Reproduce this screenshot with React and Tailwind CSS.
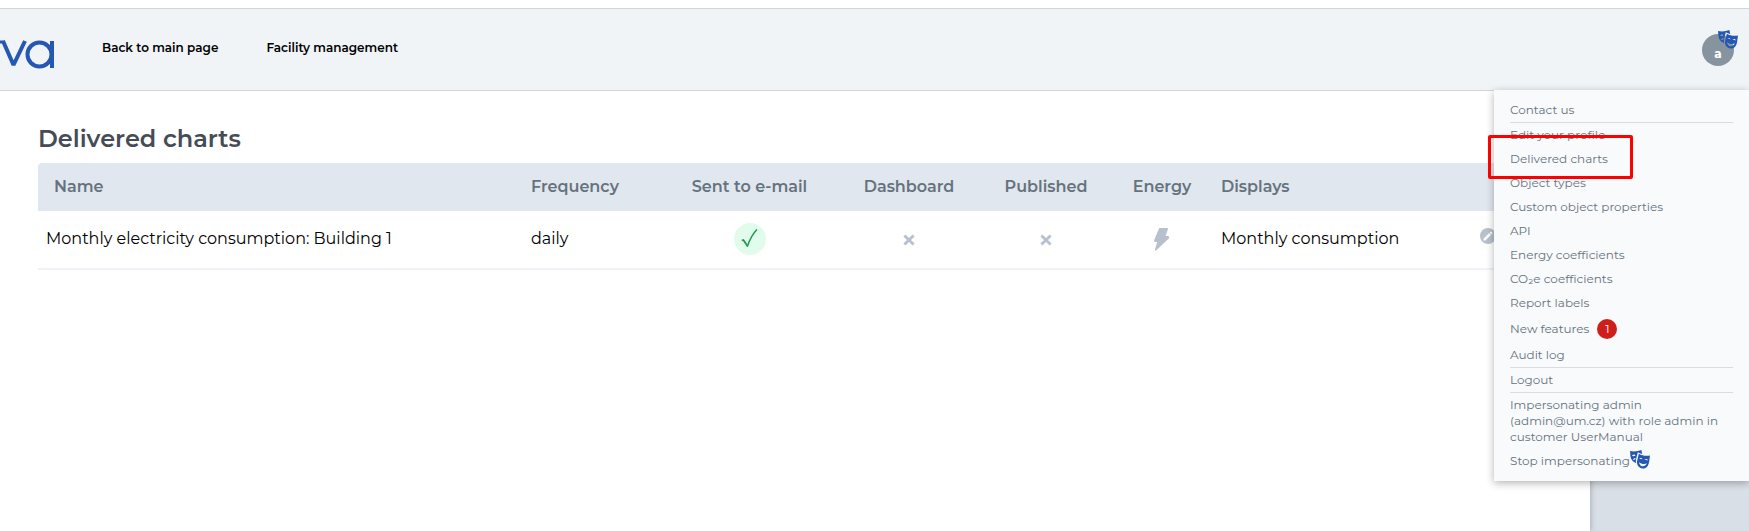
import React from "react";
import { MdEdit } from "react-icons/md";

const navLinks = ["Back to main page", "Facility management"];

const settingsLinks = [
  "Edit your profile",
  "Delivered charts",
  "Object types",
  "Custom object properties",
  "API",
  "Energy coefficients",
  "CO₂e coefficients",
  "Report labels",
];

const charts = [
  {
    name: "Monthly electricity consumption: Building 1",
    frequency: "daily",
    email: true,
    dashboard: false,
    published: false,
    displays: "Monthly consumption",
  },
];

function Logo() {
  return (
    <svg
      width="56"
      height="32"
      viewBox="0 0 56 32"
      fill="none"
      stroke="#2558b3"
      strokeWidth="4"
      role="img"
      aria-label="Home"
    >
      <line x1="0" y1="4" x2="5" y2="4" strokeWidth="3" />
      <polyline points="3,3 13.5,27 25,3" strokeLinejoin="bevel" />
      <circle cx="39.5" cy="16.5" r="12" />
      <line x1="52" y1="3" x2="52" y2="30" />
    </svg>
  );
}

// Pair of theatre masks, shown while impersonating another user
function MasksIcon({ className }) {
  return (
    <svg width="20" height="19" viewBox="0 0 20 19" fill="#2558b3" fillRule="evenodd" className={className} aria-hidden="true">
      <path d="M0 1 C4 1.8 8 1.3 11.4 0 L12.2 4 C10.6 3.8 9.2 3.2 7.8 2.3 L6 9.5 C5.7 10.8 5.8 12 6.2 13.2 C3 12 0.8 9.6 0.4 6 Z M2 5.6 C3.2 4.2 4.6 4.2 5.6 5.2 C4.4 6.4 3.2 6.5 2 5.6 Z M2.8 10 C3.6 8.6 4.6 8 5.6 8 L5.2 9.6 Z" />
      <path d="M8.8 3.8 C12 5.8 16 6.2 20 5.6 L19 12.4 C18.2 16.6 15.4 19 12.4 18.5 C9 18 6.6 15 7 11.4 Z M9.2 9 C10.4 7.6 11.8 7.8 12.6 9.4 C11.4 8.9 10.4 8.8 9.2 9 Z M14.4 9.8 C15.8 8.6 17.2 8.9 17.8 10.4 C16.6 9.9 15.6 9.7 14.4 9.8 Z M9 12.2 C11.2 14 14 14.5 16.8 13.6 C15.6 15.8 14 16.6 12.4 16.3 C10.6 16 9.4 14.6 9 12.2 Z" />
    </svg>
  );
}

function BoltIcon() {
  return (
    <svg width="16" height="24" viewBox="0 0 16 24" fill="#b7c1cd" className="mx-auto" role="img" aria-label="Electricity">
      <path d="M4.8 1 Q5 0 6 0 H13 Q14.3 0 13.9 1.2 L11.6 8 H14.2 Q15.8 8.6 14.8 10.6 L2.6 22 Q0.6 23.6 1 21.2 L3.2 14 H1.2 Q-0.2 13.8 0.1 12.2 Z" />
    </svg>
  );
}

// Round status mark, green tick or grey cross
function Flag({ on, label }) {
  if (on) {
    return (
      <span
        role="img"
        aria-label={label}
        className="inline-flex h-8 w-8 items-center justify-center rounded-full bg-[#e2fcec]"
      >
        <svg width="20" height="20" viewBox="0 0 20 20" fill="none" stroke="#239654">
          <path d="M1.8 11.5 L3.4 11 L7.5 17" strokeWidth="1.8" />
          <path d="M7.2 17.8 C9.5 11 12.5 5 17 0.5" strokeWidth="1.5" />
        </svg>
      </span>
    );
  }
  return (
    <span role="img" aria-label={label} className="inline-flex h-8 items-center pt-0.5">
      <svg width="12" height="12" viewBox="0 0 12 12" stroke="#b7c1cd" strokeWidth="2.8">
        <path d="M1.4 1.4 L10.6 10.6 M10.6 1.4 L1.4 10.6" />
      </svg>
    </span>
  );
}

function MenuItem({ children }) {
  return (
    <li>
      <a href="#" className="block py-1">
        {children}
      </a>
    </li>
  );
}

function UserMenu() {
  return (
    <div className="absolute top-full right-0 z-10 w-[255px] bg-[#f9fafc] px-4 py-2 text-xs leading-4 text-[#65737e] shadow-[0_2px_8px_rgba(0,0,0,0.3)]">
      <ul>
        <li className="border-b border-[#d9dde2]">
          <a href="#" className="block py-1">
            Contact us
          </a>
        </li>
        {settingsLinks.map((label) =>
          label === "Delivered charts" ? (
            <li key={label} className="relative">
              <a href="#" className="block py-1">
                {label}
              </a>
              <span className="pointer-events-none absolute -top-3 -left-[22px] h-11 w-[145px] rounded-xs border-3 border-[#ff0000]" />
            </li>
          ) : (
            <MenuItem key={label}>{label}</MenuItem>
          )
        )}
        <li>
          <a href="#" className="flex items-center gap-2 py-1">
            New features
            <span className="flex h-5 w-5 items-center justify-center rounded-full bg-[#cf1f1a] text-white">
              1
            </span>
          </a>
        </li>
        <li className="border-b border-[#d9dde2]">
          <a href="#" className="block py-1">
            Audit log
          </a>
        </li>
        <li className="border-b border-[#d9dde2]">
          <a href="#" className="block py-1">
            Logout
          </a>
        </li>
        <li className="py-1">
          Impersonating admin (admin@um.cz) with role admin in customer UserManual
        </li>
        <li>
          <button type="button" className="flex h-6 items-center">
            Stop impersonating
            <MasksIcon className="mb-1" />
          </button>
        </li>
      </ul>
    </div>
  );
}

function Header() {
  return (
    <header className="relative z-10 mt-2 flex h-[83px] items-center border-y border-[#cfd5d9] bg-[#f0f4f7]">
      <a href="#" className="mt-2 w-[102px]">
        <Logo />
      </a>
      <nav className="mb-1 flex gap-12 text-xs font-semibold text-black">
        {navLinks.map((label) => (
          <a key={label} href="#">
            {label}
          </a>
        ))}
      </nav>
      <button
        type="button"
        aria-label="User menu"
        className="relative mr-[15px] ml-auto h-8 w-8 rounded-full bg-[#87949f] pt-2 text-xs font-bold text-white"
      >
        a
        <MasksIcon className="absolute -top-1 -right-1" />
      </button>
      <UserMenu />
    </header>
  );
}

function ChartsTable() {
  return (
    <table className="mt-2 w-full table-fixed text-left text-base">
      <colgroup>
        <col className="w-[485px]" />
        <col className="w-[139px]" />
        <col className="w-[175px]" />
        <col className="w-[144px]" />
        <col className="w-[130px]" />
        <col className="w-[102px]" />
        <col />
        <col className="w-20" />
      </colgroup>
      <thead>
        <tr className="h-12 bg-[#e1e7ee] text-[#65737e] *:font-semibold">
          <th className="rounded-tl px-4">Name</th>
          <th className="px-2">Frequency</th>
          <th className="px-2 text-center">Sent to e-mail</th>
          <th className="px-2 text-center">Dashboard</th>
          <th className="px-2 text-center">Published</th>
          <th className="px-2 text-center">Energy</th>
          <th className="px-2">Displays</th>
          <th className="rounded-tr" aria-label="Actions" />
        </tr>
      </thead>
      <tbody>
        {charts.map((chart) => (
          <tr key={chart.name} className="h-[58px] border-b-2 border-[#f0f4f8] text-black">
            <td className="px-2 pb-0.5">{chart.name}</td>
            <td className="px-2 pb-0.5">{chart.frequency}</td>
            <td className="px-2 pb-0.5">
              <div className="flex justify-center">
                <Flag on={chart.email} label="Sent to e-mail" />
              </div>
            </td>
            <td className="px-2 pb-0.5">
              <div className="flex justify-center">
                <Flag on={chart.dashboard} label="Not on dashboard" />
              </div>
            </td>
            <td className="px-2 pb-0.5">
              <div className="flex justify-center">
                <Flag on={chart.published} label="Not published" />
              </div>
            </td>
            <td className="px-2">
              <BoltIcon />
            </td>
            <td className="px-2 pb-0.5">{chart.displays}</td>
            <td className="px-2 pb-2">
              <button
                type="button"
                aria-label="Edit"
                className="flex h-4 w-4 items-center justify-center rounded-full bg-[#b7c1cd] text-white"
              >
                <MdEdit className="h-3 w-3" />
              </button>
            </td>
          </tr>
        ))}
      </tbody>
    </table>
  );
}

export default function App() {
  return (
    <div className="flex min-h-screen flex-col bg-white font-['Montserrat','Inter',sans-serif]">
      <Header />
      <div className="flex flex-1">
        <main className="z-0 flex-1 bg-white px-[38px] pt-8 shadow-[0_0_6px_rgba(0,0,0,0.3)]">
          <h1 className="text-2xl font-semibold text-[#454c55]">Delivered charts</h1>
          <ChartsTable />
        </main>
        <aside className="w-[159px] bg-[#d9dfe6]" />
      </div>
    </div>
  );
}
